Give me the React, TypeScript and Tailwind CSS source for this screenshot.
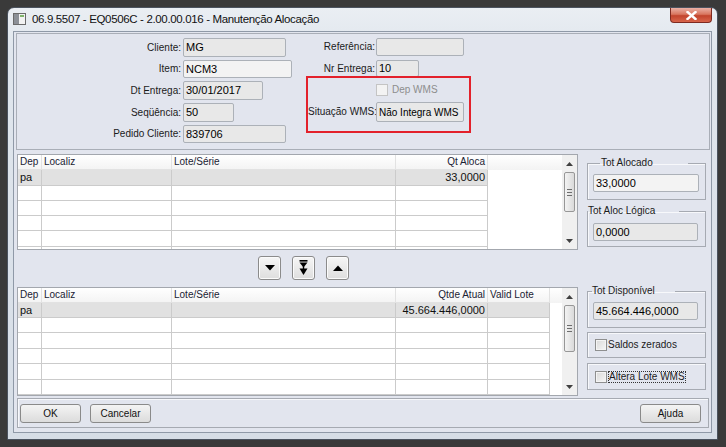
import React from "react";

const LINE = "border-[#cbcbcb]";

function Input({ cls, value, bright, small }: { cls: string; value: string; bright?: boolean; small?: boolean }) {
  return (
    <div
      className={`${cls} border border-[#acb1b8] rounded-[2px] ${bright ? "bg-[#f3f3f3]" : "bg-[#e8e8e8]"} pl-[2px] ${small ? "text-[10px]" : "text-[11px]"} text-black whitespace-nowrap overflow-hidden flex items-center`}
    >
      {value}
    </div>
  );
}

function LRow({ cls, label, value, inputCls, bright }: { cls: string; label: string; value: string; inputCls: string; bright?: boolean }) {
  return (
    <div className={`flex items-center ${cls}`}>
      <div className="w-[164px] text-right text-[10px] text-[#1b1b1b] leading-[12px]">{label}</div>
      <Input cls={`ml-[2px] ${inputCls}`} value={value} bright={bright} />
    </div>
  );
}

function Check({ disabled }: { disabled?: boolean }) {
  return (
    <div
      className={`w-[12px] h-[12px] shrink-0 border ${disabled ? "border-[#c4c4c4] bg-[#f3f3f3]" : "border-[#8e8f8f] bg-[linear-gradient(135deg,#d9d9d9,#f7f7f7)] shadow-[inset_0_0_0_1px_#f4f4f4]"}`}
    />
  );
}

function ArrowBtn({ kind }: { kind: "down" | "double" | "up" }) {
  return (
    <div className="w-[23px] h-[24px] border border-[#8b8b8b] rounded-[3px] bg-[linear-gradient(180deg,#f6f6f6,#dedede)] shadow-[inset_0_0_0_1px_#fbfbfb] flex items-center justify-center">
      {kind === "down" && (
        <svg width="10" height="6" viewBox="0 0 10 6">
          <polygon points="0,0 10,0 5,5.5" fill="#000" />
        </svg>
      )}
      {kind === "up" && (
        <svg width="10" height="6" viewBox="0 0 10 6">
          <polygon points="0,6 10,6 5,0.5" fill="#000" />
        </svg>
      )}
      {kind === "double" && (
        <svg width="9" height="16" viewBox="0 0 9 16">
          <rect x="0.5" y="0" width="8" height="1.6" fill="#000" />
          <polygon points="0.5,2.5 8.5,2.5 4.5,7.5" fill="#000" />
          <rect x="3.8" y="6" width="1.4" height="3" fill="#000" />
          <polygon points="0.5,8.5 8.5,8.5 4.5,15" fill="#000" />
        </svg>
      )}
    </div>
  );
}

function Scrollbar({ thumb }: { thumb: string }) {
  return (
    <div className="w-[15px] h-full bg-[#f0f0f0] flex flex-col shrink-0">
      <div className="h-[17px] flex items-center justify-center shrink-0">
        <svg width="7" height="4" viewBox="0 0 7 4">
          <polygon points="0,4 7,4 3.5,0" fill="#404040" />
        </svg>
      </div>
      <div className="flex-1 flex flex-col">
        <div className={`${thumb} mx-[2px] border border-[#979797] rounded-[2px] bg-[linear-gradient(90deg,#f3f3f3,#dadada)] flex flex-col items-center justify-center gap-[2px]`}>
          <div className="w-[5px] h-[1px] bg-[#6d6d6d]" />
          <div className="w-[5px] h-[1px] bg-[#6d6d6d]" />
          <div className="w-[5px] h-[1px] bg-[#6d6d6d]" />
        </div>
      </div>
      <div className="h-[17px] flex items-center justify-center shrink-0">
        <svg width="7" height="4" viewBox="0 0 7 4">
          <polygon points="0,0 7,0 3.5,4" fill="#404040" />
        </svg>
      </div>
    </div>
  );
}

function GRow({ cols, h, cells, right, sel }: { cols: string[]; h: string; cells: string[]; right: number[]; sel?: boolean }) {
  return (
    <div className={`flex shrink-0 ${h}`}>
      {cols.map((c, i) => (
        <div
          key={i}
          className={`${c} h-full border-r border-b ${LINE} ${sel ? "bg-[#e1e1e1]" : "bg-white"} ${right.includes(i) ? "text-right pr-[2px]" : "pl-[2px]"} text-[11px] text-[#111] whitespace-nowrap overflow-hidden leading-[14px]`}
        >
          {cells[i] || ""}
        </div>
      ))}
    </div>
  );
}

function Grid({
  cls,
  cols,
  heads,
  right,
  first,
  heights,
  thumb,
}: {
  cls: string;
  cols: string[];
  heads: string[];
  right: number[];
  first: string[];
  heights: string[];
  thumb: string;
}) {
  return (
    <div className={`${cls} border border-[#a3a7ae] bg-white flex overflow-hidden`}>
      <div className="w-[544px] h-full flex flex-col overflow-hidden">
        <div className="flex h-[15px] shrink-0 bg-[linear-gradient(180deg,#ffffff,#f3f3f3)]">
          {cols.map((c, i) => (
            <div
              key={i}
              className={`${c} h-full border-r border-b border-[#e2e2e2] ${right.includes(i) ? "text-right pr-[2px]" : "pl-[2px]"} text-[10px] text-[#1a2233] leading-[14px] whitespace-nowrap`}
            >
              {heads[i]}
            </div>
          ))}
        </div>
        {heights.map((h, r) => (
          <GRow key={r} cols={cols} h={h} cells={r === 0 ? first : []} right={right} sel={r === 0} />
        ))}
      </div>
      <Scrollbar thumb={thumb} />
    </div>
  );
}

export default function App() {
  const cols1 = ["w-[24px]", "w-[130px]", "w-[224px]", "w-[92px]"];
  const cols2 = ["w-[24px]", "w-[130px]", "w-[224px]", "w-[92px]", "w-[62px]"];
  return (
    <div className="w-[726px] h-[447px] bg-[#3a3a3a] pt-[7px] pl-[7px] overflow-hidden font-['Liberation_Sans',Arial,sans-serif]">
      <div className="w-[711px] h-[433px] rounded-t-[7px] border border-[#4b535f] bg-[linear-gradient(180deg,#eaeef3_0%,#e0e6ed_10%,#d6dde6_100%)] flex flex-col px-[5px] pb-[6px]">
        {/* Title bar */}
        <div className="h-[23px] shrink-0 flex items-start">
          <svg className="mt-[5px] shrink-0" width="13" height="12" viewBox="0 0 13 12">
            <rect x="0.5" y="0.5" width="12" height="11" fill="#f2f2f2" stroke="#6a6a6a" />
            <rect x="1" y="1" width="5" height="10" fill="#8c9097" />
            <rect x="7" y="2" width="4" height="2" fill="#7fb36a" />
          </svg>
          <div className="ml-[6px] mt-[4px] text-[11.5px] leading-[15px] tracking-[-0.35px] text-[#111] whitespace-nowrap">
            06.9.5507 - EQ0506C - 2.00.00.016 - Manutenção Alocação
          </div>
          <div className="ml-auto w-[42px] h-[15px] rounded-b-[4px] border border-t-0 border-[#7e2a20] bg-[linear-gradient(180deg,#eab1a6_0%,#d9765f_45%,#c2442d_55%,#d8654b_100%)] flex items-center justify-center">
            <svg width="11" height="9" viewBox="0 0 11 9">
              <path d="M1.5 1 L9.5 8 M9.5 1 L1.5 8" stroke="#fff" strokeWidth="2.4" strokeLinecap="square" />
            </svg>
          </div>
        </div>

        {/* Client area */}
        <div className="flex-1 border border-[#8f99a7] bg-[#e2e5ee] flex flex-col">
          {/* Top group */}
          <div className="mt-[1px] ml-[2px] mr-[1px] h-[117px] border border-[#a9aeb7] flex shrink-0">
            <div className="w-[289px] flex flex-col pt-[4px]">
              <LRow cls="" label="Cliente:" value="MG" inputCls="w-[103px] h-[19px]" />
              <LRow cls="mt-[3px]" label="Item:" value="NCM3" inputCls="w-[109px] h-[18px]" bright />
              <LRow cls="mt-[3px]" label="Dt Entrega:" value="30/01/2017" inputCls="w-[80px] h-[19px]" />
              <LRow cls="mt-[3px]" label="Seqüência:" value="50" inputCls="w-[51px] h-[19px]" />
              <LRow cls="mt-[3px]" label="Pedido Cliente:" value="839706" inputCls="w-[103px] h-[18px]" />
            </div>
            <div className="flex flex-col pt-[4px]">
              <div className="flex items-center">
                <div className="w-[69px] text-right text-[10px] text-[#1b1b1b] leading-[12px]">Referência:</div>
                <Input cls="ml-[1px] w-[88px] h-[18px]" value="" />
              </div>
              <div className="flex items-center mt-[4px]">
                <div className="w-[69px] text-right text-[10px] text-[#1b1b1b] leading-[12px]">Nr Entrega:</div>
                <Input cls="ml-[1px] w-[43px] h-[17px]" value="10" />
              </div>
              <div className="-mt-[1px] w-[165px] h-[57px] border-2 border-[#e3212b] flex flex-col">
                <div className="flex items-center mt-[6px] h-[12px]">
                  <div className="w-[68px]" />
                  <Check disabled />
                  <div className="ml-[4px] text-[10px] text-[#8d8d8d] leading-[12px]">Dep WMS</div>
                </div>
                <div className="flex items-center mt-[6px]">
                  <div className="w-[67px] text-right text-[10px] text-[#1b1b1b] leading-[12px] whitespace-nowrap">Situação WMS:</div>
                  <Input cls="ml-[1px] w-[88px] h-[20px]" value="Não Integra WMS" small />
                </div>
              </div>
            </div>
          </div>

          {/* Middle */}
          <div className="flex mt-[4px] shrink-0">
            <div className="ml-[3px] w-[561px] flex flex-col">
              <Grid
                cls="h-[96px]"
                cols={cols1}
                heads={["Dep", "Localiz", "Lote/Série", "Qt Aloca"]}
                right={[3]}
                first={["pa", "", "", "33,0000"]}
                heights={["h-[16px]", "h-[15px]", "h-[15px]", "h-[15px]", "h-[16px]", "h-[15px]"]}
                thumb="h-[40px]"
              />
              <div className="mt-[6px] h-[24px] flex pl-[241px] gap-[11px]">
                <ArrowBtn kind="down" />
                <ArrowBtn kind="double" />
                <ArrowBtn kind="up" />
              </div>
              <Grid
                cls="mt-[7px] h-[109px]"
                cols={cols2}
                heads={["Dep", "Localiz", "Lote/Série", "Qtde Atual", "Valid Lote"]}
                right={[3]}
                first={["pa", "", "", "45.664.446,0000", ""]}
                heights={["h-[15px]", "h-[15px]", "h-[16px]", "h-[15px]", "h-[16px]", "h-[15px]"]}
                thumb="h-[47px]"
              />
            </div>

            <div className="ml-[9px] w-[119px] flex flex-col">
              <fieldset className="mt-[3px] w-[119px] border border-[#a6aab2] shadow-[inset_1px_1px_0_#f7f8fb]">
                <legend className="ml-[12px] pl-[1px] pr-[35px] text-[10px] leading-[12px] text-[#1b1b1b]">Tot Alocado</legend>
                <Input cls="mt-[5px] mb-[7px] ml-[5px] w-[106px] h-[18px]" value="33,0000" bright />
              </fieldset>
              <fieldset className="mt-[5px] w-[119px] border border-[#a6aab2] shadow-[inset_1px_1px_0_#f7f8fb]">
                <legend className="pr-[24px] text-[10px] leading-[12px] text-[#1b1b1b]">Tot Aloc Lógica</legend>
                <Input cls="mt-[6px] mb-[5px] ml-[5px] w-[105px] h-[18px]" value="0,0000" />
              </fieldset>
              <fieldset className="mt-[38px] w-[119px] border border-[#a6aab2] shadow-[inset_1px_1px_0_#f7f8fb]">
                <legend className="ml-[4px] pr-[20px] text-[10px] leading-[12px] text-[#1b1b1b]">Tot Disponível</legend>
                <Input cls="mt-[5px] mb-[7px] ml-[5px] w-[105px] h-[18px]" value="45.664.446,0000" />
              </fieldset>
              <div className="mt-[4px] h-[26px] border border-[#a6aab2] shadow-[inset_1px_1px_0_#f7f8fb] flex items-center pl-[7px]">
                <Check />
                <div className="ml-[1px] text-[10px] leading-[12px] text-[#1b1b1b]">Saldos zerados</div>
              </div>
              <div className="mt-[5px] h-[27px] border border-[#a6aab2] shadow-[inset_1px_1px_0_#f7f8fb] flex items-center pl-[7px]">
                <Check />
                <div className="ml-[1px] border border-dotted border-[#333] px-[0px] text-[10px] leading-[10px] text-[#1b1b1b]">Altera Lote WMS</div>
              </div>
            </div>
          </div>

          {/* Bottom buttons */}
          <div className="mt-[2px] ml-[3px] w-[692px] h-[30px] border border-[#a6aab2] shadow-[inset_1px_1px_0_#f7f8fb] flex items-start pt-[5px] pl-[2px] pr-[7px] shrink-0">
            <div className="w-[61px] h-[19px] border border-[#8a8a8a] rounded-[3px] bg-[linear-gradient(180deg,#f4f4f4,#dcdcdc)] flex items-center justify-center text-[10px] text-[#111]">OK</div>
            <div className="ml-[9px] w-[61px] h-[19px] border border-[#8a8a8a] rounded-[3px] bg-[linear-gradient(180deg,#f4f4f4,#dcdcdc)] flex items-center justify-center text-[10px] text-[#111]">Cancelar</div>
            <div className="ml-auto w-[61px] h-[19px] border border-[#8a8a8a] rounded-[3px] bg-[linear-gradient(180deg,#f4f4f4,#dcdcdc)] flex items-center justify-center text-[10px] text-[#111]">Ajuda</div>
          </div>
        </div>
      </div>
    </div>
  );
}
